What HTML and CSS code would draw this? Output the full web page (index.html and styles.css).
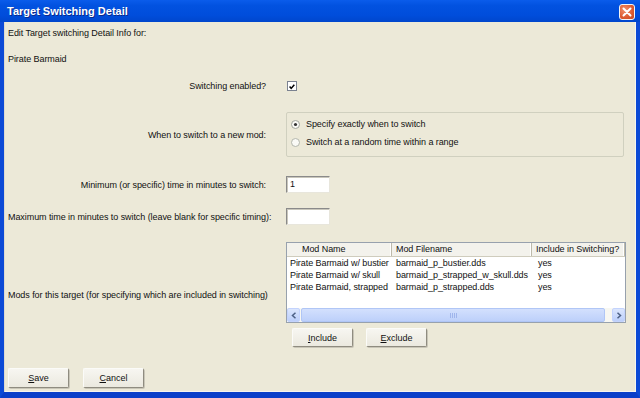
FILE: index.html
```html
<!DOCTYPE html>
<html lang="en">
<head>
    <meta charset="UTF-8">
    <title>Target Switching Detail</title>
    <link rel="stylesheet" href="styles.css">
</head>
<body>
    <div class="window">
        <div class="titlebar">
            <span class="title">Target Switching Detail</span>
            <button class="close" aria-label="Close">
                <svg width="10" height="10" viewBox="0 0 10 10"><path d="M1.5 1.5 L8.5 8.5 M8.5 1.5 L1.5 8.5" stroke="#fff" stroke-width="2" stroke-linecap="round"/></svg>
            </button>
        </div>

        <div class="frame">
            <p class="intro">Edit Target switching Detail Info for:</p>
            <p class="target">Pirate Barmaid</p>

            <div class="form">
                <div class="row row-check">
                    <span class="lbl">Switching enabled?</span>
                    <span class="checkbox">
                        <svg width="10" height="10" viewBox="0 0 10 10"><path d="M2 4.4 L4 6.8 L7.9 2.2" stroke="#000" stroke-width="1.9" fill="none"/></svg>
                    </span>
                </div>

                <div class="row row-group">
                    <span class="lbl">When to switch to a new mod:</span>
                    <div class="groupbox">
                        <div class="radio">
                            <svg width="9" height="9" viewBox="0 0 9 9"><circle cx="4.5" cy="4.5" r="4" fill="#fafaf6" stroke="#a3a69c"/><circle cx="4.5" cy="4.5" r="1.6" fill="#333"/></svg>
                            <span>Specify exactly when to switch</span>
                        </div>
                        <div class="radio">
                            <svg width="9" height="9" viewBox="0 0 9 9"><circle cx="4.5" cy="4.5" r="4" fill="#fafaf6" stroke="#b3b6ac"/></svg>
                            <span>Switch at a random time within a range</span>
                        </div>
                    </div>
                </div>

                <div class="row row-min">
                    <span class="lbl">Minimum (or specific) time in minutes to switch:</span>
                    <span class="textbox">1</span>
                </div>

                <div class="row row-max">
                    <span class="lbl">Maximum time in minutes to switch (leave blank for specific timing):</span>
                    <span class="textbox"></span>
                </div>

                <div class="row row-mods">
                    <span class="lbl">Mods for this target (for specifying which are included in switching)</span>
                    <div class="mods">
                        <div class="listview">
                            <div class="lv-head">
                                <span class="hcell first">Mod Name</span>
                                <span class="hcell">Mod Filename</span>
                                <span class="hcell">Include in Switching?</span>
                            </div>
                            <div class="lv-body">
                                <div class="lv-row"><span>Pirate Barmaid w/ bustier</span><span>barmaid_p_bustier.dds</span><span>yes</span></div>
                                <div class="lv-row"><span>Pirate Barmaid w/ skull</span><span>barmaid_p_strapped_w_skull.dds</span><span>yes</span></div>
                                <div class="lv-row"><span>Pirate Barmaid, strapped</span><span>barmaid_p_strapped.dds</span><span>yes</span></div>
                            </div>
                            <div class="hscroll">
                                <span class="arrow">
                                    <svg width="6" height="7" viewBox="0 0 6 7"><path d="M4.5 0.8 L1.5 3.5 L4.5 6.2" stroke="#4d6185" stroke-width="1.5" fill="none"/></svg>
                                </span>
                                <div class="track">
                                    <div class="thumb">
                                        <svg width="7" height="5" viewBox="0 0 7 5"><path d="M0.5 0 V5 M2.5 0 V5 M4.5 0 V5 M6.5 0 V5" stroke="#9fb5ec" stroke-width="1"/></svg>
                                    </div>
                                </div>
                                <span class="arrow">
                                    <svg width="6" height="7" viewBox="0 0 6 7"><path d="M1.5 0.8 L4.5 3.5 L1.5 6.2" stroke="#4d6185" stroke-width="1.5" fill="none"/></svg>
                                </span>
                            </div>
                        </div>
                        <div class="lv-buttons">
                            <button class="btn"><u>I</u>nclude</button>
                            <button class="btn"><u>E</u>xclude</button>
                        </div>
                    </div>
                </div>
            </div>

            <div class="footer">
                <button class="btn"><u>S</u>ave</button>
                <button class="btn"><u>C</u>ancel</button>
            </div>
        </div>
    </div>
</body>
</html>
```

FILE: styles.css
```css
* {
    box-sizing: border-box;
}

body {
    margin: 0;
    background: #ece9d8;
    color: #111;
    font-family: "Liberation Sans", Arial, sans-serif;
    font-size: 9px;
    letter-spacing: -0.07px;
}

.window {
    width: 640px;
    height: 398px;
    display: flex;
    flex-direction: column;
}

.titlebar {
    flex: none;
    height: 22px;
    display: flex;
    align-items: center;
    justify-content: space-between;
    padding: 0 5px 0 7px;
    background: linear-gradient(#0a5ceb 0%, #0252e0 25%, #004ddb 70%, #0046cc 100%);
}

.title {
    color: #fff;
    font-weight: bold;
    font-size: 11px;
    letter-spacing: 0;
    text-shadow: 1px 1px 0 #0b2a8c;
}

.close {
    width: 16px;
    height: 16px;
    padding: 0;
    margin-top: 2px;
    display: flex;
    align-items: center;
    justify-content: center;
    border: 1px solid #f4f4f4;
    border-radius: 3px;
    background: radial-gradient(circle at 35% 35%, #f0906c, #dc5a30 60%, #c44a24);
}

.frame {
    flex: 1;
    padding: 0 4px;
    background: #ece9d8;
    border-left: 4px solid #0c4ad6;
    border-right: 4px solid #0c4ad6;
    border-bottom: 6px solid #0a3fc9;
    box-shadow: inset 1px 0 0 #dcdad0, inset -1px -1px 0 #f6f5ef;
}

.intro,
.target {
    margin: 5px 0 0;
    line-height: 12px;
}

.target {
    margin-top: 14px;
}

.form {
    margin-top: 14px;
    display: flex;
    flex-direction: column;
}

.row {
    display: grid;
    grid-template-columns: 258px auto;
    column-gap: 20px;
    align-items: center;
}

.lbl {
    text-align: right;
    white-space: nowrap;
}

.row-check {
    height: 13px;
}

.checkbox {
    width: 10px;
    height: 10px;
    margin-left: 1px;
    display: flex;
    background: #fff;
    border: 1px solid #7b8290;
}

.row-group {
    margin-top: 20px;
}

.groupbox {
    width: 338px;
    height: 45px;
    padding: 5px 4px 0;
    display: flex;
    flex-direction: column;
    gap: 6px;
    border: 1px solid #d0d0bf;
    border-radius: 2px;
}

.radio {
    display: flex;
    align-items: center;
    gap: 6px;
    height: 12px;
}

.row-min {
    margin-top: 19px;
}

.row-max {
    margin-top: 15px;
}

.textbox {
    width: 44px;
    height: 17px;
    padding: 2px 3px;
    background: #fff;
    border: 1px solid;
    border-color: #8a8a8a #e8e6dc #e8e6dc #8a8a8a;
    box-shadow: inset 1px 1px 0 #c9c7bc;
}

.row-mods {
    margin-top: 17px;
}

.listview {
    width: 340px;
    height: 81px;
    display: flex;
    flex-direction: column;
    background: #fff;
    border: 1px solid #97a1ad;
}

.lv-head,
.lv-row {
    display: grid;
    grid-template-columns: 105px 140px 93px;
}

.lv-head {
    height: 14px;
    background: #f3f2ec;
    border-bottom: 1px solid #cfccbd;
}

.hcell {
    padding-left: 4px;
    line-height: 13px;
    border-right: 1px solid #bdbaab;
    box-shadow: inset -1px 0 0 #fff;
}

.hcell.first {
    padding-left: 15px;
}

.lv-body {
    flex: 1;
}

.lv-row {
    line-height: 12px;
    white-space: nowrap;
}

.lv-row span:nth-child(1) {
    padding-left: 3px;
}

.lv-row span:nth-child(2) {
    padding-left: 4px;
}

.lv-row span:nth-child(3) {
    padding-left: 6px;
}

.hscroll {
    height: 14px;
    display: flex;
    background: #f7f7f2;
}

.arrow {
    width: 13px;
    display: flex;
    align-items: center;
    justify-content: center;
    background: linear-gradient(#dbe6fd, #bccffa);
    border: 1px solid #c3d3fd;
    border-radius: 2px;
}

.track {
    flex: 1;
    display: flex;
    padding: 0 7px 0 1px;
}

.thumb {
    flex: 1;
    display: flex;
    align-items: center;
    justify-content: center;
    background: linear-gradient(#d3e0fd, #bdd0fa);
    border: 1px solid #b0c6f6;
    border-radius: 2px;
}

.lv-buttons {
    margin: 5px 0 0 6px;
    display: flex;
    gap: 13px;
}

.btn {
    width: 61px;
    height: 19px;
    padding: 0;
    font: inherit;
    color: #111;
    background: linear-gradient(#f7f6f1, #ebe9df);
    border: 1px solid;
    border-color: #fbfbf8 #8f8c80 #8f8c80 #fbfbf8;
    border-radius: 2px;
    box-shadow: 1px 1px 0 #c9c6b8;
}

.footer {
    margin-top: 21px;
    display: flex;
    gap: 14px;
}

.footer .btn {
    height: 20px;
}
```
